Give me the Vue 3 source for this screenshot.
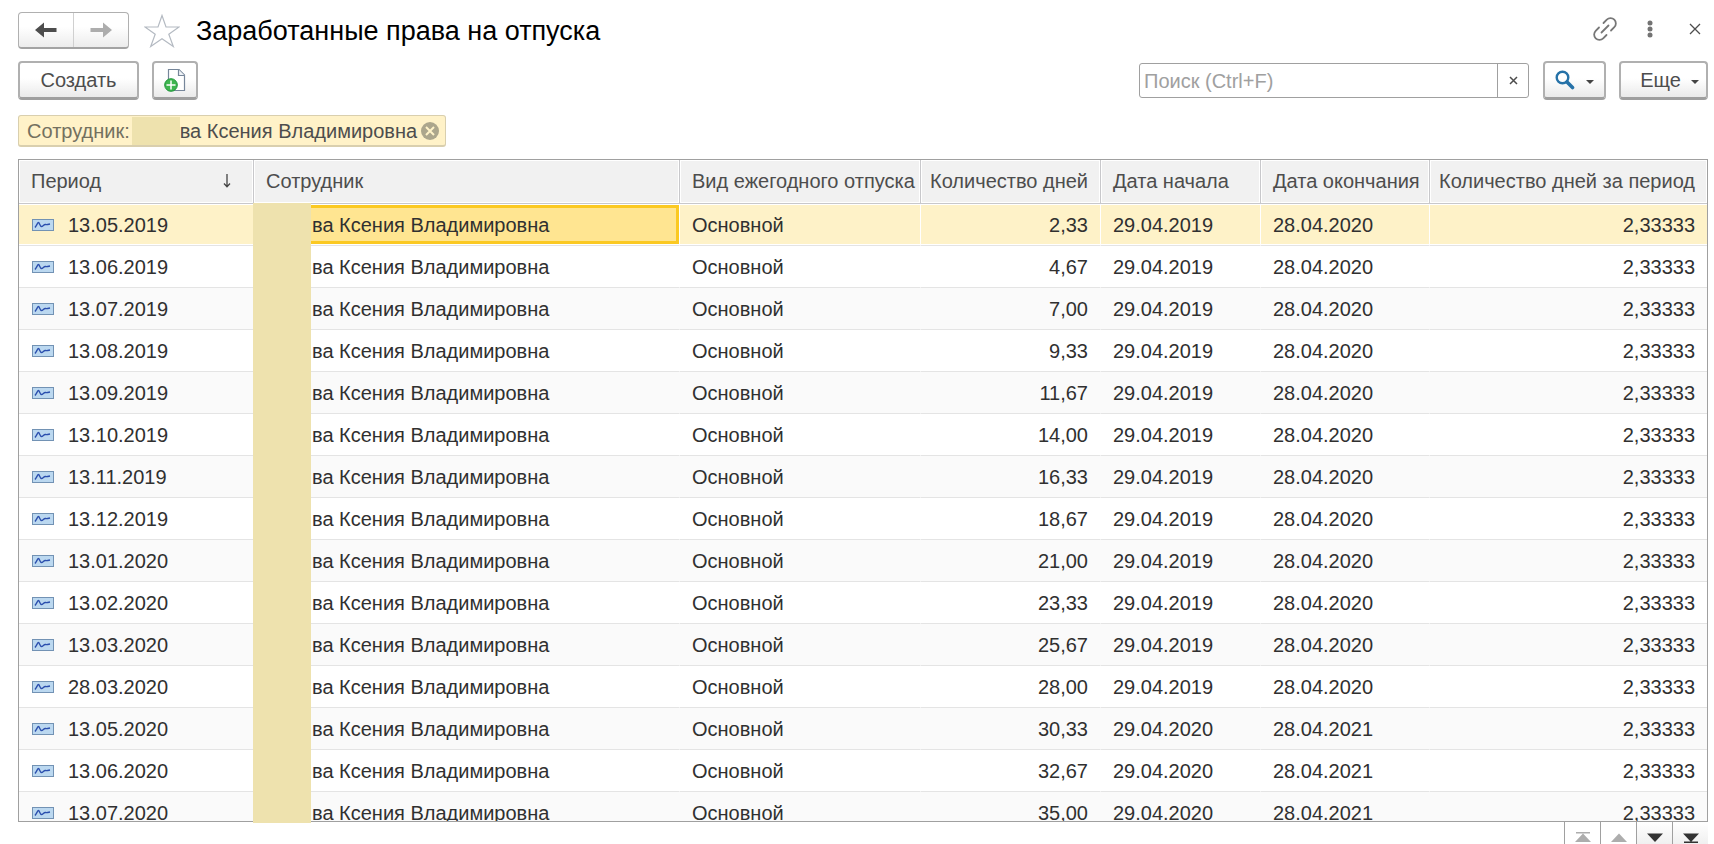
<script setup>
import { ref } from 'vue'

const query = ref('')
const name = 'ва Ксения Владимировна'
const kind = 'Основной'
const perPeriod = '2,33333'

const first = ['29.04.2019', '28.04.2020']
const second = ['29.04.2020', '28.04.2021']

const rows = [
  ['13.05.2019', '2,33', first],
  ['13.06.2019', '4,67', first],
  ['13.07.2019', '7,00', first],
  ['13.08.2019', '9,33', first],
  ['13.09.2019', '11,67', first],
  ['13.10.2019', '14,00', first],
  ['13.11.2019', '16,33', first],
  ['13.12.2019', '18,67', first],
  ['13.01.2020', '21,00', first],
  ['13.02.2020', '23,33', first],
  ['13.03.2020', '25,67', first],
  ['28.03.2020', '28,00', first],
  ['13.05.2020', '30,33', second],
  ['13.06.2020', '32,67', second],
  ['13.07.2020', '35,00', second],
].map(([period, days, [from, to]]) => ({ period, days, from, to }))
</script>

<template>
  <main class="window">
    <header class="titlebar">
      <div class="nav">
        <button type="button" aria-label="Назад">
          <svg width="22" height="16" viewBox="0 0 22 16"><path d="M0 8 9 0.5V6H21.5V10H9V15.5Z" fill="#4d4d4d" /></svg>
        </button>
        <button type="button" aria-label="Вперед">
          <svg width="22" height="16" viewBox="0 0 22 16"><path d="M22 8 13 0.5V6H0.5V10H13V15.5Z" fill="#adadad" /></svg>
        </button>
      </div>
      <button type="button" class="plain star" aria-label="В избранное">
        <svg width="36" height="34" viewBox="0 0 36 34">
          <path d="M18 1.5 22 13H35L24.8 20.3 29.3 32.5 18 24.8 6.700 32.5 11.200 20.3 1 13H14Z" fill="#fff" stroke="#b4bac2" stroke-width="1.200" />
        </svg>
      </button>
      <h1>Заработанные права на отпуска</h1>
      <div class="tools">
        <button type="button" class="plain" aria-label="Получить ссылку">
          <svg width="24" height="24" viewBox="0 0 24 24" fill="none" stroke="#777" stroke-width="1.800" stroke-linecap="round">
            <path d="M10.500 6 13.800 2.700A5 5 0 0 1 21.300 10.200L18 13.500M6 10.500 2.700 13.800A5 5 0 0 0 10.200 21.300L13.500 18M8.500 15.500 15.500 8.500" />
          </svg>
        </button>
        <button type="button" class="plain" aria-label="Дополнительно">
          <svg width="6" height="18" viewBox="0 0 6 18" fill="#737373"><circle cx="3" cy="3" r="2.500" /><circle cx="3" cy="9" r="2.500" /><circle cx="3" cy="15" r="2.500" /></svg>
        </button>
        <button type="button" class="plain" aria-label="Закрыть">
          <svg width="12" height="12" viewBox="0 0 12 12"><path d="M1 1 11 11M11 1 1 11" stroke="#4d4d4d" stroke-width="1.300" /></svg>
        </button>
      </div>
    </header>

    <div class="commands">
      <button type="button" class="btn create">Создать</button>
      <button type="button" class="btn copy" aria-label="Создать копированием">
        <svg width="22" height="24" viewBox="0 0 22 24">
          <path d="M4.500 1.500H15L20.500 7V22.500H4.500Z" fill="#fff" stroke="#76869a" stroke-width="1.200" />
          <path d="M14.500 1.500V7.500H20.500" fill="#eef2f6" stroke="#76869a" stroke-width="1.200" />
          <circle cx="7" cy="17" r="6.300" fill="#3fb54f" stroke="#1f963a" />
          <path d="M7 12.500V21.500M2.500 17H11.500" stroke="#fff" stroke-width="1.500" />
        </svg>
      </button>
      <div class="search">
        <input v-model="query" type="text" placeholder="Поиск (Ctrl+F)" aria-label="Поиск" />
        <button type="button" aria-label="Очистить" @click="query = ''">
          <svg width="9" height="9" viewBox="0 0 9 9"><path d="M1 1 8 8M8 1 1 8" stroke="#4d4d4d" stroke-width="1.500" /></svg>
        </button>
      </div>
      <button type="button" class="btn find" aria-label="Найти">
        <svg width="20" height="20" viewBox="0 0 20 20" fill="none" stroke="#2672a8">
          <circle cx="7.500" cy="7.500" r="5.800" stroke-width="2.400" />
          <path d="M12 12 17.500 17.500" stroke-width="3.600" stroke-linecap="round" />
        </svg>
        <svg class="caret" width="8" height="4" viewBox="0 0 8 4"><path d="M0 0H8L4 4Z" fill="#444" /></svg>
      </button>
      <button type="button" class="btn more">
        Еще
        <svg class="caret" width="8" height="4" viewBox="0 0 8 4"><path d="M0 0H8L4 4Z" fill="#444" /></svg>
      </button>
    </div>

    <div class="filters">
      <div class="chip">
        <span class="chip-label">Сотрудник:</span>
        <span class="chip-mask"></span>
        <span>{{ name }}</span>
        <button type="button" class="plain" aria-label="Убрать отбор">
          <svg width="18" height="18" viewBox="0 0 18 18"><circle cx="9" cy="9" r="9" fill="#aca68c" /><path d="M5 5 13 13M13 5 5 13" stroke="#fff3c8" stroke-width="2" /></svg>
        </button>
      </div>
    </div>

    <section class="list">
      <div class="viewport">
        <table>
          <colgroup>
            <col class="c-period" /><col /><col class="c-kind" /><col class="c-days" />
            <col class="c-from" /><col class="c-to" /><col class="c-total" />
          </colgroup>
          <thead>
            <tr>
              <th>
                <div class="sorted">
                  Период
                  <svg width="8" height="14" viewBox="0 0 8 14"><path d="M4 0V12M1 9.500 4 12.700 7 9.500" fill="none" stroke="#444" stroke-width="1.300" /></svg>
                </div>
              </th>
              <th>Сотрудник</th>
              <th>Вид ежегодного отпуска</th>
              <th class="num">Количество дней</th>
              <th>Дата начала</th>
              <th>Дата окончания</th>
              <th class="num">Количество дней за период</th>
            </tr>
          </thead>
          <tbody>
            <tr v-for="(row, i) in rows" :key="row.period" :class="{ selected: i === 0 }">
              <td>
                <div class="period">
                  <svg width="22" height="12" viewBox="0 0 22 12">
                    <rect x="0.500" y="0.500" width="21" height="11" fill="#bbd8f0" stroke="#7292b4" />
                    <path d="M3 8.500C5 6 5.500 3.500 6.500 3.500S8 7.500 9.500 7.500 12 5 13.500 5.500 15 5.500 18 5" fill="none" stroke="#2b4fae" stroke-width="1.400" />
                  </svg>
                  {{ row.period }}
                </div>
              </td>
              <td class="person">{{ name }}</td>
              <td>{{ kind }}</td>
              <td class="num">{{ row.days }}</td>
              <td>{{ row.from }}</td>
              <td>{{ row.to }}</td>
              <td class="num">{{ perPeriod }}</td>
            </tr>
          </tbody>
        </table>
      </div>
      <div class="mask"></div>
    </section>

    <footer class="pager">
      <button type="button" aria-label="В начало">
        <svg width="16" height="12" viewBox="0 0 16 12" fill="#adadad"><path d="M1 0H15V1.500H1ZM8 1.500 16 10H0Z" /></svg>
      </button>
      <button type="button" aria-label="Вверх">
        <svg width="16" height="12" viewBox="0 0 16 12" fill="#adadad"><path d="M8 1.500 16 10H0Z" /></svg>
      </button>
      <button type="button" class="on" aria-label="Вниз">
        <svg width="16" height="12" viewBox="0 0 16 12" fill="#333"><path d="M0 1.500H16L8 10Z" /></svg>
      </button>
      <button type="button" class="on" aria-label="В конец">
        <svg width="16" height="12" viewBox="0 0 16 12" fill="#333"><path d="M0 1.500H16L8 10ZM1 9.500H15V11H1Z" /></svg>
      </button>
    </footer>
  </main>
</template>

<style>
body {
  margin: 0;
  background: #fff;
}
</style>

<style scoped>
.window {
  display: flex;
  flex-direction: column;
  box-sizing: border-box;
  height: 100vh;
  padding: 12px 6px 0 18px;
  overflow: hidden;
  color: #4d4d4d;
  font: 20px/24px "Liberation Sans", Arial, sans-serif;
}
.window * {
  box-sizing: border-box;
}
svg {
  display: block;
  flex: none;
}
button {
  display: flex;
  align-items: center;
  justify-content: center;
  margin: 0;
  padding: 0;
  border: 0;
  background: none;
  color: inherit;
  font: inherit;
}
.titlebar {
  display: flex;
  align-items: center;
  flex: none;
  height: 37px;
}
.nav {
  display: flex;
  width: 111px;
  height: 37px;
  border: 1px solid #b0b0b0;
  border-bottom: 2px solid #a3a3a3;
  border-radius: 4px;
  background: linear-gradient(#fff 40%, #ececec);
}
.nav button {
  flex: 1;
}
.nav button + button {
  border-left: 1px solid #d0d0d0;
}
.star {
  margin-left: 15px;
}
h1 {
  margin: 0 0 0 16px;
  color: #000;
  font-size: 27px;
  font-weight: 400;
  line-height: 32px;
}
.tools {
  display: flex;
  align-items: center;
  gap: 30px;
  margin-left: auto;
  padding: 0 7px 4px 0;
}
.tools button:last-child {
  margin-left: 6px;
}
.commands {
  display: flex;
  align-items: center;
  flex: none;
  margin-top: 12px;
}
.btn {
  height: 39px;
  border: 2px solid #b0b0b0;
  border-bottom: 3px solid #9f9f9f;
  border-radius: 4px;
  background: linear-gradient(#fff 45%, #eaeaea);
}
.create {
  width: 121px;
}
.copy {
  width: 46px;
  margin-left: 13px;
}
.search {
  display: flex;
  width: 390px;
  height: 35px;
  margin-left: auto;
  border: 1px solid #a0a0a0;
  border-radius: 3px;
}
.search input {
  flex: 1;
  min-width: 0;
  padding: 0 4px;
  border: 0;
  outline: 0;
  background: none;
  font: inherit;
}
.search input::placeholder {
  color: #a0a0a0;
  opacity: 1;
}
.search button {
  width: 31px;
  border-left: 1px solid #a0a0a0;
}
.caret {
  margin-top: 3px;
}
.find {
  width: 63px;
  margin-left: 14px;
  gap: 11px;
}
.more {
  width: 89px;
  margin-left: 13px;
  padding-left: 12px;
  gap: 10px;
}
.filters {
  display: flex;
  flex: none;
  margin-top: 15px;
}
.chip {
  display: flex;
  align-items: center;
  height: 32px;
  padding: 1px 6px 0 8px;
  border: 1px solid #d9cfae;
  border-bottom-width: 2px;
  border-radius: 3px;
  background: #fff2c8;
}
.chip-label {
  color: #73705f;
}
.chip-mask {
  align-self: stretch;
  width: 48px;
  margin-left: 2px;
  background: #eee2ae;
}
.chip button {
  margin-left: 4px;
}
.list {
  position: relative;
  flex: 1;
  min-height: 0;
  margin-top: 12px;
}
.viewport {
  height: 100%;
  overflow: hidden;
  border: 1px solid #a0a0a0;
}
.mask {
  position: absolute;
  top: 44px;
  bottom: -1px;
  left: 235px;
  width: 58px;
  background: #eee2ae;
}
table {
  width: 100%;
  table-layout: fixed;
  border-spacing: 0;
}
.c-period {
  width: 235px;
}
.c-kind {
  width: 241px;
}
.c-days {
  width: 180px;
}
.c-from {
  width: 160px;
}
.c-to {
  width: 169px;
}
.c-total {
  width: 277px;
}
th {
  height: 44px;
  padding: 0 0 2px 12px;
  border-right: 1px solid #c8c8cb;
  border-bottom: 1px solid #c8c8cb;
  background: #f1f1f1;
  box-shadow: inset 0 0 0 1px #fff;
  font-weight: 400;
  text-align: left;
  white-space: nowrap;
}
td {
  height: 42px;
  padding: 0 0 0 12px;
  border-bottom: 1px solid #e4e4e4;
  border-right: 1px solid transparent;
  color: #303030;
  white-space: nowrap;
}
th:last-child,
td:last-child {
  border-right: 0;
}
th.num {
  padding: 0 12px 2px 0;
  text-align: right;
}
td.num {
  padding: 0 12px 0 0;
  text-align: right;
}
.sorted {
  display: flex;
  align-items: center;
  justify-content: space-between;
  padding-right: 22px;
}
.period {
  display: flex;
  align-items: center;
  gap: 14px;
  padding-left: 1px;
}
.person {
  padding-left: 58px;
}
tbody tr:nth-child(odd) td {
  background: #fafafa;
}
tbody tr.selected td {
  border-right-color: #fff;
  background: #fef2c8;
  background-clip: padding-box;
  box-shadow: inset 0 1px #fff, inset 0 -1px #fff;
}
tbody tr.selected td.person {
  background: linear-gradient(#ffe591, #ffe591) center / calc(100% - 6px) calc(100% - 8px) no-repeat #fbc922;
  background-clip: padding-box;
}
.pager {
  display: flex;
  flex: none;
  justify-content: flex-end;
  height: 22px;
}
.pager button {
  width: 36px;
  align-items: flex-end;
  border-left: 1px solid #a0a0a0;
}
.pager button.on {
  background: linear-gradient(#fff, #f0f0f0);
}
</style>
